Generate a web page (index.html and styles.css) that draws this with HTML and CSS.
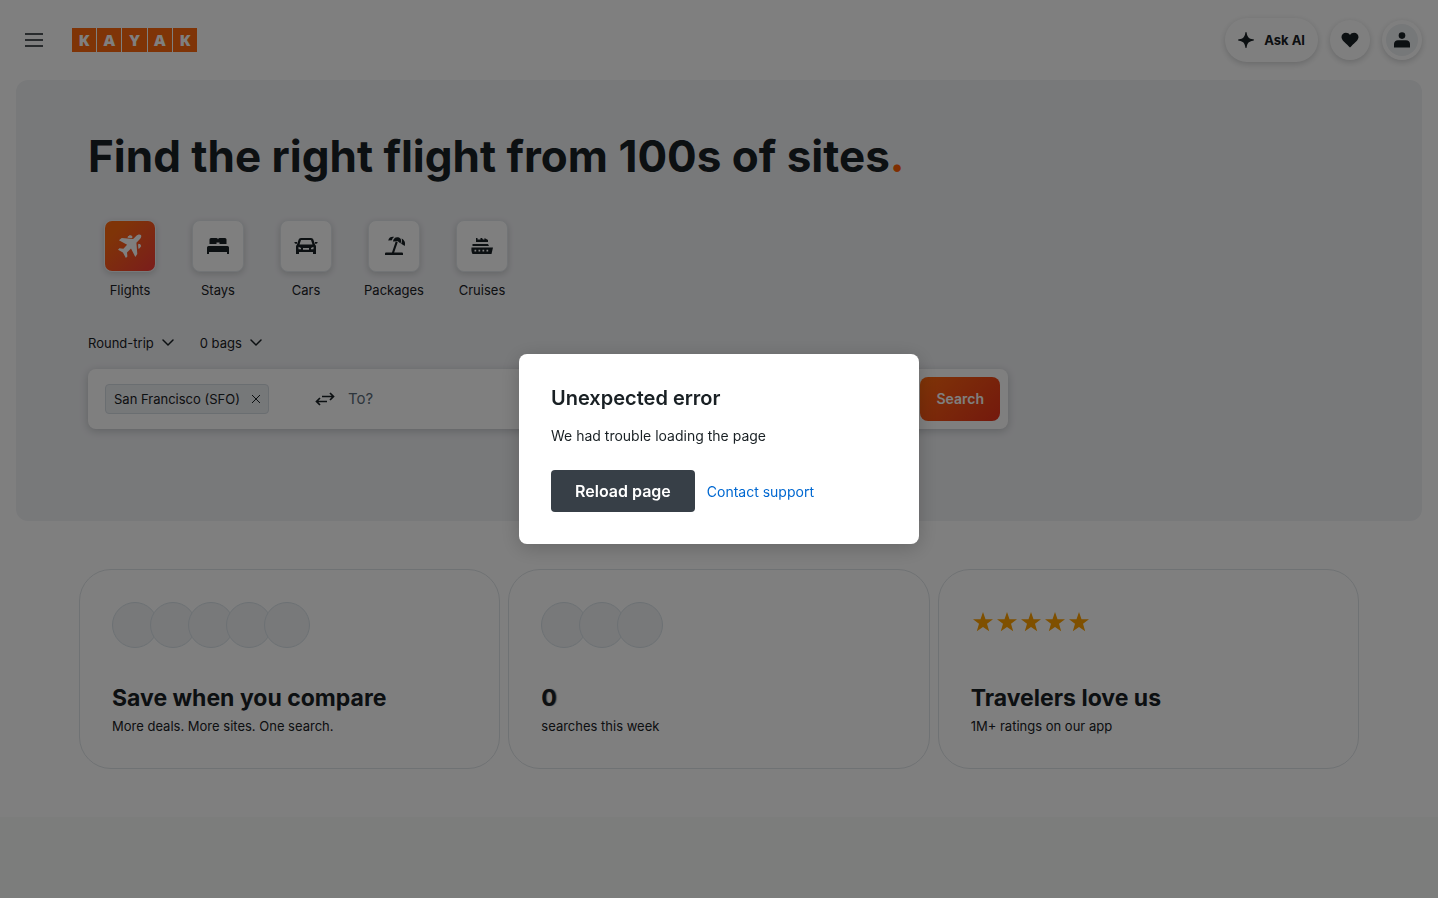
FILE: index.html
```html
<!DOCTYPE html>
<html lang="en">
<head>
<meta charset="utf-8">
<meta name="viewport" content="width=device-width, initial-scale=1">
<title>KAYAK</title>
<link rel="stylesheet" href="styles.css">
</head>
<body>
<header class="header">
  <button class="menu-button" type="button" aria-label="Open main navigation">
    <svg width="20" height="16" viewBox="0 0 20 16"><path d="M1 2h18M1 8h18M1 14h18" stroke="currentColor" stroke-width="1.700"/></svg>
  </button>
  <a class="logo" href="#" aria-label="KAYAK home"><span>K</span><span>A</span><span>Y</span><span>A</span><span>K</span></a>
  <div class="header-actions">
    <button class="pill ask" type="button">
      <svg width="16" height="16" viewBox="0 0 16 16" fill="currentColor"><path d="M8 0c.5 0 .6.400.7 1C9.200 5 11 6.800 15 7.300c.6.100 1 .2 1 .7s-.4.600-1 .7C11 9.200 9.200 11 8.700 15c-.1.600-.2 1-.7 1s-.6-.4-.7-1C6.800 11 5 9.200 1 8.700.4 8.600 0 8.500 0 8s.4-.6 1-.7C5 6.800 6.800 5 7.300 1 7.400.4 7.500 0 8 0z"/></svg>
      Ask AI
    </button>
    <button class="pill round" type="button" aria-label="Trips">
      <svg width="18" height="16" viewBox="0 0 18 16" fill="currentColor"><path d="M9 15.400 7.900 14.400C3.500 10.400.5 8 .5 5.100.5 2.700 2.500.8 4.900.8 6.700.8 8.100 1.600 9 2.900 9.900 1.600 11.300.8 13.100.8c2.400 0 4.400 1.900 4.400 4.300 0 2.900-3 5.300-7.400 9.300z"/></svg>
    </button>
    <button class="pill round" type="button" aria-label="Sign in">
      <span class="avatar"><svg width="16" height="16" viewBox="0 0 16 16" fill="currentColor"><circle cx="8" cy="3.600" r="3.300"/><path d="M0 15.500V12c0-2.200 1.700-3.700 4-3.700h8c2.300 0 4 1.500 4 3.700v3.500z"/></svg></span>
    </button>
  </div>
</header>

<main class="main">
  <section class="hero">
    <h1 class="hero-title">Find the right flight from 100s of sites<span class="dot">.</span></h1>
    <nav class="verticals" aria-label="Products">
      <a class="vertical active" href="#"><span class="tile"><svg width="24" height="24" viewBox="0 0 24 24" fill="currentColor"><path d="M22.900 1.100c-1.200-1.100-3.400-.4-4.700.9l-3.100 3-11.400-.9L.9 6.200l8.200 4.600-3.700 4-4-.5L0 15.800l4.900 2.800 3 5.300 1.500-1.500-.4-4 4-3.800 4.300 8.300 2-2.800-.9-11.300 3.100-3.200c1.400-1.300 2.300-3.300 1.400-4.500z"/><path d="m9.800 3.200 1.900-1.500 2 .4.300 1.500zM20.600 10.300l1.600.4.300 1.900-1.600 1.800z" stroke="currentColor"/></svg></span>Flights</a>
      <a class="vertical" href="#"><span class="tile"><svg width="24" height="24" viewBox="0 0 24 24" fill="currentColor"><path d="M3.500 10V5.500Q3.500 4 5 4h5.500q1.500 0 1.500 1.500Q12 4 13.500 4H19q1.500 0 1.500 1.500V10h-7V8.500h-3V10zM1 20v-6.500Q1 12 2.500 12h19q1.500 0 1.500 1.500V20h-2v-2H3v2z"/></svg></span>Stays</a>
      <a class="vertical" href="#"><span class="tile"><svg width="24" height="24" viewBox="0 0 24 24"><path fill="currentColor" fill-rule="evenodd" d="M7 4h10c1.300 0 2 .7 2.400 1.800L21 10.500c.7.600 1 1.200 1 2V20h-3v-2H5v2H2v-7.500c0-.8.300-1.400 1-2l1.600-4.700C5 4.700 5.700 4 7 4zM7 6 5.500 10.500h13L17 6zM4.500 12.800v2.500H7v-1.200zM19.500 12.800v2.500H17v-1.200zM9 14v1.700h6V14zM.5 8H3v1.800H1.500L.5 9zM21 8h2.500v1l-1 .8H21z"/></svg></span>Cars</a>
      <a class="vertical" href="#"><span class="tile"><svg width="24" height="24" viewBox="0 0 24 24" fill="currentColor"><path d="M4 18.500h16q1 0 1 1V21H3v-1.500q0-1 1-1zM9.800 19l3.900-11.500 2 .7L12 19z"/><path d="M11 7.500C11.300 4.500 13.500 2.500 17 3.500c2.300 1 2.700 3 1.500 6l-2.700-2.200zM12.300 3C9.500 2.500 7 3.300 6.200 6.500l3.800-.3c.2-1.400 1-2.500 2.300-3.200zM19.500 4.500c3 1.500 4.300 4.300 3.200 7.500l-3.500-2.300c.9-2 1-3.800.3-5.200z"/></svg></span>Packages</a>
      <a class="vertical" href="#"><span class="tile"><svg width="24" height="24" viewBox="0 0 24 24" fill="currentColor"><path d="M6 8V4h1.500v1.500h3V4H12l1 1.500h1.500V4L18 6v2zM2.500 10h15.500l1 2H2.500z"/><path fill-rule="evenodd" d="M1.500 13.500H23L21.500 20h-19C1.500 18 1.200 16 1.500 13.500zM4.500 15.700v1.800h1.700v-1.800zM8.500 15.700v1.800h1.700v-1.800zM12.500 15.700v1.800h1.700v-1.800zM16.500 15.700v1.800h1.700v-1.800z"/></svg></span>Cruises</a>
    </nav>
    <div class="options">
      <button class="option" type="button">Round-trip <svg width="12" height="8" viewBox="0 0 12 8"><path d="m1 1 5 5 5-5" fill="none" stroke="currentColor" stroke-width="1.500" stroke-linecap="round"/></svg></button>
      <button class="option" type="button">0 bags <svg width="12" height="8" viewBox="0 0 12 8"><path d="m1 1 5 5 5-5" fill="none" stroke="currentColor" stroke-width="1.500" stroke-linecap="round"/></svg></button>
    </div>
    <form class="search">
      <div class="origin">
        <span class="chip">San Francisco (SFO)
          <button class="chip-remove" type="button" aria-label="Remove San Francisco"><svg width="8" height="8" viewBox="0 0 8 8"><path d="m0 0 8 8M8 0 0 8" stroke="currentColor"/></svg></button>
        </span>
      </div>
      <button class="swap" type="button" aria-label="Swap origin and destination"><svg width="20" height="14" viewBox="0 0 20 14"><path d="M7 4.500h11.500M15 1l3.500 3.500L15 8M12 9.500H1.500M5 6 1.500 9.500 5 13" fill="none" stroke="currentColor" stroke-width="1.700"/></svg></button>
      <input class="destination" type="text" placeholder="To?" aria-label="Destination">
      <button class="submit" type="button">Search</button>
    </form>
  </section>

  <section class="cards">
    <article class="card">
      <div class="card-media"><i class="bubble"></i><i class="bubble"></i><i class="bubble"></i><i class="bubble"></i><i class="bubble"></i></div>
      <h2 class="card-title">Save when you compare</h2>
      <p class="card-text">More deals. More sites. One search.</p>
    </article>
    <article class="card">
      <div class="card-media"><i class="bubble"></i><i class="bubble"></i><i class="bubble"></i></div>
      <h2 class="card-title counter">0</h2>
      <p class="card-text">searches this week</p>
    </article>
    <article class="card">
      <div class="card-media stars">
        <svg width="120" height="24" viewBox="0 0 120 24" role="img" aria-label="5 stars"><defs><path id="star" d="m12 2 2.500 7.300H22l-6 4.500 2.200 7.500L12 16.900l-6.200 4.400L8 13.800 2 9.300h7.500z"/></defs><use href="#star"/><use href="#star" x="24"/><use href="#star" x="48"/><use href="#star" x="72"/><use href="#star" x="96"/></svg>
      </div>
      <h2 class="card-title">Travelers love us</h2>
      <p class="card-text">1M+ ratings on our app</p>
    </article>
  </section>
</main>
<div class="lower"></div>

<div class="overlay">
  <section class="dialog" role="alertdialog" aria-modal="true" aria-labelledby="error-title">
    <h2 class="dialog-title" id="error-title">Unexpected error</h2>
    <p class="dialog-text">We had trouble loading the page</p>
    <div class="dialog-actions">
      <button class="reload" type="button">Reload page</button>
      <a class="support" href="#">Contact support</a>
    </div>
  </section>
</div>
</body>
</html>
```
FILE: styles.css
```css
*,
*::before,
*::after {
  box-sizing: border-box;
}

body {
  display: flex;
  flex-direction: column;
  min-height: 100vh;
  margin: 0;
  background: #fff;
  color: #192024;
  font-family: Inter, "Liberation Sans", sans-serif;
  font-size: 13px;
  line-height: 20px;
}

h1,
h2,
p {
  margin: 0;
}

button,
input {
  margin: 0;
  padding: 0;
  border: 0;
  background: none;
  color: inherit;
  font: inherit;
}

a {
  color: inherit;
  text-decoration: none;
}

svg {
  display: block;
  flex: none;
}

.header {
  display: flex;
  align-items: center;
  height: 80px;
  padding: 0 16px;
}

.menu-button {
  display: grid;
  place-items: center;
  width: 36px;
  height: 36px;
  margin-right: 20px;
}

.logo {
  display: grid;
  grid-template-columns: repeat(5, 1fr);
  gap: 1px;
  width: 125px;
  height: 24px;
}

.logo span {
  background: #ff690f;
  color: #fff;
  font-family: "Open Sans", sans-serif;
  font-size: 16px;
  font-weight: 800;
  line-height: 24px;
  text-align: center;
}

.header-actions {
  display: flex;
  align-items: center;
  gap: 12px;
  margin-left: auto;
}

.pill {
  display: flex;
  align-items: center;
  justify-content: center;
  border-radius: 22px;
  background: #fff;
  box-shadow: 0 2px 6px rgba(25, 32, 36, 0.2);
}

.ask {
  gap: 10px;
  height: 44px;
  padding: 0 13px;
  font-weight: 700;
}

.round {
  width: 40px;
  height: 40px;
}

.avatar {
  display: grid;
  place-items: center;
  width: 32px;
  height: 32px;
  border-radius: 50%;
  background: #edf0f3;
}

.hero {
  margin: 0 16px;
  padding: 50px 72px 92px;
  border-radius: 12px;
  background: #f1f2f5;
}

.hero-title {
  font-size: 44px;
  font-weight: 700;
  line-height: 52px;
}

.dot {
  color: #ff5c00;
}

.verticals {
  display: flex;
  margin: 38px 0 0 -2px;
}

.vertical {
  display: flex;
  flex-direction: column;
  align-items: center;
  gap: 8px;
  width: 88px;
}

.tile {
  display: grid;
  place-items: center;
  width: 52px;
  height: 52px;
  border: 1px solid #e5e9ed;
  border-radius: 8px;
  background: #fff;
  box-shadow: 0 2px 6px rgba(25, 32, 36, 0.18);
}

.active .tile {
  background: linear-gradient(135deg, #ff690f 20%, #f53a38) padding-box;
  border-color: transparent;
  color: #fff;
}

.options {
  display: flex;
  gap: 26px;
  margin-top: 33px;
}

.option {
  display: flex;
  align-items: center;
  gap: 8px;
}

.search {
  display: flex;
  align-items: center;
  max-width: 920px;
  height: 60px;
  margin-top: 16px;
  padding: 8px;
  border-radius: 8px;
  background: #fff;
  box-shadow: 0 2px 8px rgba(25, 32, 36, 0.22);
}

.origin {
  width: 209px;
  padding-left: 9px;
}

.chip {
  display: inline-flex;
  align-items: center;
  justify-content: space-between;
  gap: 12px;
  height: 30px;
  padding: 0 8px;
  border: 1px solid #d5dce2;
  border-radius: 4px;
  background: #edf0f3;
  white-space: nowrap;
}

.swap {
  display: grid;
  place-items: center;
  width: 40px;
  height: 40px;
}

.destination {
  flex: 1;
  min-width: 0;
  padding-left: 3px;
  font-size: 15px;
}

.destination::placeholder {
  color: #5b6b78;
  opacity: 1;
}

.submit {
  height: 44px;
  padding: 0 16px;
  border-radius: 8px;
  background: linear-gradient(135deg, #ff690f, #e8321b);
  color: #fff;
  font-size: 14px;
  font-weight: 600;
}

.cards {
  display: grid;
  grid-template-columns: repeat(3, 1fr);
  gap: 8px;
  max-width: 1280px;
  margin: 48px auto;
}

.card {
  padding: 32px;
  border: 1px solid #dfe4e8;
  border-radius: 32px;
}

.card-media {
  display: flex;
  height: 46px;
  margin-bottom: 34px;
}

.bubble {
  width: 46px;
  height: 46px;
  border: 1px solid #d9e2e8;
  border-radius: 50%;
  background: #f0f2f5;
}

.bubble + .bubble {
  margin-left: -8px;
}

.stars {
  padding-top: 8px;
  color: #ffa000;
  fill: currentColor;
}

.card-title {
  font-size: 23px;
  font-weight: 700;
  line-height: 32px;
}

.counter {
  text-shadow: 1px 0 1px rgba(25, 32, 36, 0.5);
}

.card-text {
  margin-top: 2px;
}

.lower {
  flex: 1;
  background: #f8fbf9;
}

.overlay {
  position: fixed;
  inset: 0;
  display: grid;
  place-items: center;
  background: rgba(0, 0, 0, 0.5);
}

.dialog {
  width: 400px;
  max-width: 100%;
  padding: 32px;
  border-radius: 8px;
  background: #fff;
  box-shadow: 0 4px 20px rgba(0, 0, 0, 0.2);
  font-size: 14px;
}

.dialog-title {
  font-size: 20px;
  font-weight: 600;
  line-height: 24px;
}

.dialog-text {
  margin: 16px 0 24px;
}

.dialog-actions {
  display: flex;
  align-items: baseline;
  gap: 12px;
}

.reload {
  height: 42px;
  padding: 0 24px;
  border-radius: 4px;
  background: #373f47;
  color: #fff;
  font-size: 16px;
  font-weight: 600;
}

.support {
  color: #0068d1;
}
```
